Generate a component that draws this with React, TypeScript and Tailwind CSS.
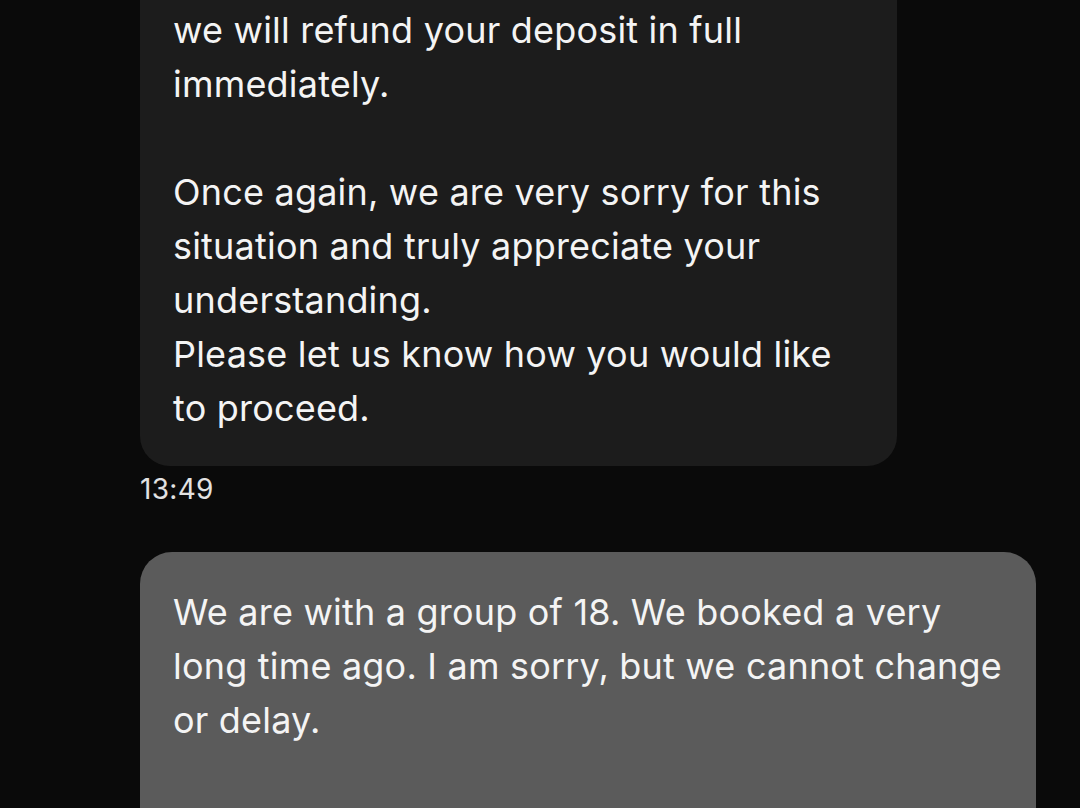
import React from 'react'

const incoming = [
  'we will refund your deposit in full',
  'immediately.',
  '',
  'Once again, we are very sorry for this',
  'situation and truly appreciate your',
  'understanding.',
  'Please let us know how you would like',
  'to proceed.',
]

const outgoing = [
  'We are with a group of 18. We booked a very',
  'long time ago. I am sorry, but we cannot change',
  'or delay.',
]

function Lines({ lines }: { lines: string[] }) {
  return (
    <>
      {lines.map((line, i) => (
        <div key={i} className="h-[54px] leading-[54px] whitespace-nowrap">
          {line}
        </div>
      ))}
    </>
  )
}

export default function App() {
  return (
    <div
      className="h-[808px] w-[1080px] overflow-hidden bg-[#0a0a0a] text-[#f4f4f4]"
      style={{ fontFamily: 'Inter, "Noto Sans", sans-serif' }}
    >
      <div className="flex flex-col items-start pl-[140px]">
        {/* received message */}
        <div className="w-[757px] rounded-b-[30px] bg-[#1c1c1c] pl-[33px] pt-[3px] pb-[31px] text-[36px] tracking-[0.2px]">
          <Lines lines={incoming} />
        </div>
        <div className="mt-[7px] text-[28px] leading-[32px] tracking-[0.3px] text-[#e2e2e2]">13:49</div>

        {/* sent message */}
        <div className="mt-[47px] w-[896px] rounded-t-[32px] bg-[#5b5b5b] pl-[33px] pt-[33px] pb-[120px] text-[36px] tracking-[0.2px]">
          <Lines lines={outgoing} />
        </div>
      </div>
    </div>
  )
}
